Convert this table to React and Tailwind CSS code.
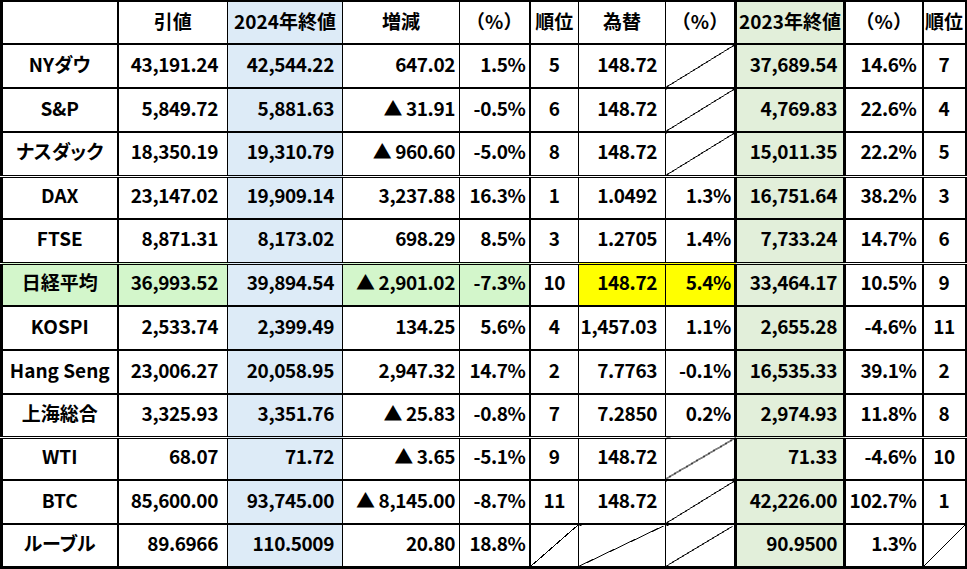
const BLUE = "bg-[#ddebf7]"
const GREEN = "bg-[#e2efda]"
const NIKKEI = "bg-[#d3f6cb]"
const YELLOW = "bg-[#ffff00]"

const diag = "bg-[linear-gradient(to_bottom_right,transparent_calc(50%_-_0.5px),#000_calc(50%_-_0.5px),#000_calc(50%_+_0.5px),transparent_calc(50%_+_0.5px))]"

// null = diagonal (empty) cell
const rows = [
    { name: "NYダウ", v: ["43,191.24", "42,544.22", "647.02", "1.5%", "5", "148.72", null, "37,689.54", "14.6%", "7"], h: "h-[44px]" },
    { name: "S&P", v: ["5,849.72", "5,881.63", "▲ 31.91", "-0.5%", "6", "148.72", null, "4,769.83", "22.6%", "4"], h: "h-[44px]" },
    { name: "ナスダック", v: ["18,350.19", "19,310.79", "▲ 960.60", "-5.0%", "8", "148.72", null, "15,011.35", "22.2%", "5"], h: "h-[44px]", double: true },
    { name: "DAX", v: ["23,147.02", "19,909.14", "3,237.88", "16.3%", "1", "1.0492", "1.3%", "16,751.64", "38.2%", "3"], h: "h-[43px]" },
    { name: "FTSE", v: ["8,871.31", "8,173.02", "698.29", "8.5%", "3", "1.2705", "1.4%", "7,733.24", "14.7%", "6"], h: "h-[44px]", double: true },
    { name: "日経平均", v: ["36,993.52", "39,894.54", "▲ 2,901.02", "-7.3%", "10", "148.72", "5.4%", "33,464.17", "10.5%", "9"], h: "h-[43px]", nikkei: true },
    { name: "KOSPI", v: ["2,533.74", "2,399.49", "134.25", "5.6%", "4", "1,457.03", "1.1%", "2,655.28", "-4.6%", "11"], h: "h-[44px]" },
    { name: "Hang Seng", v: ["23,006.27", "20,058.95", "2,947.32", "14.7%", "2", "7.7763", "-0.1%", "16,535.33", "39.1%", "2"], h: "h-[44px]" },
    { name: "上海総合", v: ["3,325.93", "3,351.76", "▲ 25.83", "-0.8%", "7", "7.2850", "0.2%", "2,974.93", "11.8%", "8"], h: "h-[43px]", double: true },
    { name: "WTI", v: ["68.07", "71.72", "▲ 3.65", "-5.1%", "9", "148.72", null, "71.33", "-4.6%", "10"], h: "h-[43px]" },
    { name: "BTC", v: ["85,600.00", "93,745.00", "▲ 8,145.00", "-8.7%", "11", "148.72", null, "42,226.00", "102.7%", "1"], h: "h-[44px]" },
    { name: "ルーブル", v: ["89.6966", "110.5009", "20.80", "18.8%", null, null, null, "90.9500", "1.3%", null], h: "h-[43px]", last: true },
]

const headers = ["", "引値", "2024年終値", "増減", "（%）", "順位", "為替", "（%）", "2023年終値", "（%）", "順位"]

// per column: right border / align / padding
const cols = [
    "border-l-[3px] border-r-2 text-center",
    "border-r text-right pr-[9px]",
    "border-r text-right pr-[8px]",
    "border-r text-right pr-[4px]",
    "border-r-2 text-right pr-[3px]",
    "border-r text-center",
    "border-r text-right pr-[8px]",
    "border-r-[3px] text-right pr-[3px]",
    "border-r-[3px] text-right pr-[6px]",
    "border-r-2 text-right pr-[5px]",
    "border-r-2 text-center",
]

const headCols = [
    "border-l-[3px] border-r-2",
    "border-r",
    "border-r",
    "border-r",
    "border-r-2",
    "border-r",
    "border-r",
    "border-r-[3px]",
    "border-r-[3px]",
    "border-r-2",
    "border-r-2",
]

const bg = (ci, row) => {
    if (ci === 2) return BLUE
    if (ci === 8) return GREEN
    if (row && row.nikkei) {
        if (ci === 0 || ci === 1 || ci === 3 || ci === 4) return NIKKEI
        if (ci === 6 || ci === 7) return YELLOW
    }
    return "bg-white"
}

const App = () => {
    return (
        <div className="w-[967px] h-[569px] bg-white font-['Noto_Sans_CJK_JP','Noto_Sans',sans-serif] font-semibold text-[19px] text-black leading-none">
            <table className="table-fixed border-collapse w-[964px]">
                <colgroup>
                    <col className="w-[116px]" />
                    <col className="w-[110px]" />
                    <col className="w-[115px]" />
                    <col className="w-[117px]" />
                    <col className="w-[70px]" />
                    <col className="w-[49px]" />
                    <col className="w-[87px]" />
                    <col className="w-[70px]" />
                    <col className="w-[109px]" />
                    <col className="w-[78px]" />
                    <col className="w-[43px]" />
                </colgroup>
                <thead>
                    <tr className="h-[43px]">
                        {headers.map((h, ci) => (
                            <th key={ci} className={`border-black border-t-2 border-b-2 font-semibold text-center px-0 pb-[5px] ${headCols[ci]} ${bg(ci)}`}>
                                {h}
                            </th>
                        ))}
                    </tr>
                </thead>
                <tbody>
                    {rows.map((r, ri) => {
                        const bottom = r.last ? "border-b-[3px]" : r.double ? "border-b-[3px] [border-bottom-style:double]" : "border-b-2"
                        return (
                            <tr key={ri} className={r.h}>
                                <td className={`border-black pb-[6px] [font-feature-settings:'palt'] ${bottom} ${cols[0]} ${bg(0, r)}`}>
                                    {r.name}
                                </td>
                                {r.v.map((v, i) => {
                                    const ci = i + 1
                                    return (
                                        <td key={ci} className={`border-black pb-[6px] tracking-[-0.4px] ${bottom} ${cols[ci]} ${v === null ? diag : bg(ci, r)}`}>
                                            {v}
                                        </td>
                                    )
                                })}
                            </tr>
                        )
                    })}
                </tbody>
            </table>
        </div>
    )
}

export default App
